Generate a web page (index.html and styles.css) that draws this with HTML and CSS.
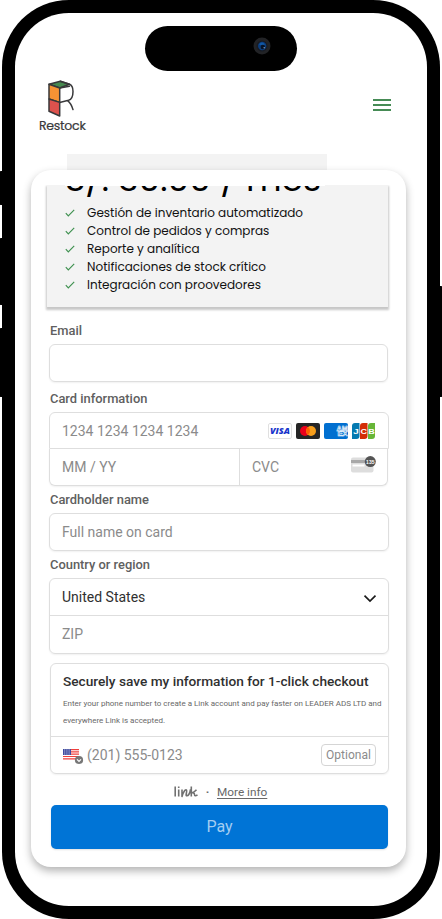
FILE: index.html
```
<!DOCTYPE html>
<html lang="es">
<head>
<meta charset="utf-8">
<title>Restock</title>
<link rel="stylesheet" href="styles.css">
</head>
<body>
<div class="device">
  <i class="key key-a"></i><i class="key key-b"></i><i class="key key-c"></i><i class="key key-d"></i>
  <div class="phone"><div class="screen">
    <div class="island">
      <svg width="18" height="18" viewBox="0 0 18 18"><circle cx="9" cy="9" r="8.5" fill="#222326"/><circle cx="9" cy="9" r="5.500" fill="#181b22"/><circle cx="9.2" cy="9" r="4.2" fill="#0a3c7c"/><path d="M6 7.5Q9 3.5 12 7.5L9 8.5z" fill="#1258a4"/><circle cx="9.800" cy="10" r="2.200" fill="#071326"/><circle cx="11.200" cy="10.800" r=".7" fill="#8fb0d5"/></svg>
    </div>
    <header class="header">
      <div class="brand">
        <svg width="28" height="38" viewBox="0 0 28 38" stroke="#38383a" stroke-width="1.5" stroke-linejoin="round" stroke-linecap="round">
          <path d="M2 4.2 13.3 1.2 22.5 4.2 12.7 8z" fill="#46894f"/>
          <path d="M2 4.2 12.7 8V22.4L2 19z" fill="#f79334"/>
          <path d="M2 19 12.7 22.4V36L2 31.2z" fill="#dd524d"/>
          <path d="M13.3 1.2 22.5 4.2C25 5 26 7.500 26 11.500C26 16.500 24.500 19.500 21.500 20.300L12.700 22.400M12.700 8 22.500 6.200M20.500 20.600C23 22.500 25 26 26 29.600" fill="none"/>
        </svg>
        <span class="brand-name">Restock</span>
      </div>
      <div class="menu"><i></i><i></i><i></i></div>
    </header>
    <div class="strip"></div>
    <main class="card">
      <section class="plan">
        <div class="price-clip"><div class="price">S/. 30.00 / mes</div></div>
        <ul class="features">
          <li><svg class="check" viewBox="0 0 10 8"><path d="M.8 4.200 3.300 6.900 9.200 .8"/></svg><span>Gestión de inventario automatizado</span></li>
          <li><svg class="check" viewBox="0 0 10 8"><path d="M.8 4.200 3.300 6.900 9.200 .8"/></svg><span>Control de pedidos y compras</span></li>
          <li><svg class="check" viewBox="0 0 10 8"><path d="M.8 4.200 3.300 6.900 9.200 .8"/></svg><span>Reporte y analítica</span></li>
          <li><svg class="check" viewBox="0 0 10 8"><path d="M.8 4.200 3.300 6.900 9.200 .8"/></svg><span>Notificaciones de stock crítico</span></li>
          <li><svg class="check" viewBox="0 0 10 8"><path d="M.8 4.200 3.300 6.900 9.200 .8"/></svg><span>Integración con proovedores</span></li>
        </ul>
      </section>
      <form class="form">
        <div class="label">Email</div>
        <div class="box narrow email"></div>
        <div class="label label-card">Card information</div>
        <div class="row number"><span>1234 1234 1234 1234</span>
          <div class="logos">
            <svg width="24" height="16" viewBox="0 0 24 16"><rect x=".5" y=".5" width="23" height="15" rx="1.5" fill="#fff" stroke="#e0e0e0"/><text x="2" y="11.200" class="visa" textLength="20" lengthAdjust="spacingAndGlyphs">VISA</text></svg>
            <svg width="24" height="16" viewBox="0 0 24 16"><rect width="24" height="16" rx="2" fill="#252525"/><circle cx="9" cy="8" r="5" fill="#eb001b"/><circle cx="15" cy="8" r="5" fill="#f79e1b"/><path d="M12 4a5 5 0 0 1 0 8a5 5 0 0 1 0-8" fill="#ff5f00"/></svg>
            <svg width="24" height="16" viewBox="0 0 24 16"><rect width="24" height="16" rx="2" fill="#016fd0"/><g class="amex"><text x="12.500" y="7.800" textLength="11.200" lengthAdjust="spacingAndGlyphs">AM</text><text x="13.500" y="13" textLength="10.200" lengthAdjust="spacingAndGlyphs">EX</text></g></svg>
            <svg width="24" height="16" viewBox="0 0 24 16"><path d="M3 0H7.500V13a3 3 0 0 1-3 3H0V3a3 3 0 0 1 3-3z" fill="#047ab1"/><path d="M11 0h4.500v13a3 3 0 0 1-3 3H8V3a3 3 0 0 1 3-3z" fill="#d42d06"/><path d="M19 0h4v13a3 3 0 0 1-3 3h-4V3a3 3 0 0 1 3-3z" fill="#67b637"/><g class="jcb"><text x="1.200" y="11" textLength="5.500" lengthAdjust="spacingAndGlyphs">J</text><text x="8.500" y="11" textLength="6.500" lengthAdjust="spacingAndGlyphs">C</text><text x="16.300" y="11" textLength="6.500" lengthAdjust="spacingAndGlyphs">B</text></g></svg>
          </div>
        </div>
        <div class="row expiry"><span class="mm">MM / YY</span><div class="cvc"><span>CVC</span>
          <svg width="25" height="17" viewBox="0 0 25 17"><rect y="1.500" width="22.500" height="15" rx="2" fill="#ddd"/><rect y="4" width="22.500" height="3" fill="#a8a8a8"/><rect x="1.500" y="8.500" width="12" height="2" fill="#fff"/><circle cx="19.300" cy="5.600" r="5.500" fill="#545454"/><text x="15.100" y="7.900" class="digits" textLength="8.400" lengthAdjust="spacingAndGlyphs">135</text></svg></div></div>
        <div class="label label-below">Cardholder name</div>
        <div class="box holder">Full name on card</div>
        <div class="label label-below">Country or region</div>
        <div class="group">
          <div class="country">United States<svg width="14" height="9" viewBox="0 0 14 9"><path d="M1.500 1.700 7 7l5.500-5.300" fill="none" stroke="#1a1a1a" stroke-width="1.700"/></svg></div>
          <div class="zip">ZIP</div>
        </div>
        <div class="group save">
          <div class="save-text"><strong>Securely save my information for 1-click checkout</strong>
            <p>Enter your phone number to create a Link account and pay faster on LEADER ADS LTD and<br>everywhere Link is accepted.</p></div>
          <div class="phone-row">
            <svg width="21" height="16" viewBox="0 0 21 16"><rect width="16" height="11" fill="#fff"/><path d="M0 .6h16M0 2.900h16M0 5.200h16M0 7.500h16M0 9.800h16" stroke="#ef403c" stroke-width="1.200"/><rect width="8" height="6" fill="#3f4b9f"/><path d="M1 1h6M1 3h6M1 5h6" stroke="#fff" stroke-width=".8" stroke-dasharray=".8 1"/><circle cx="16" cy="11" r="4.100" fill="#777"/><path d="m14 10.300 2 2 2-2" fill="none" stroke="#fff" stroke-width="1.200"/></svg>
            <span>(201) 555-0123</span><em>Optional</em>
          </div>
        </div>
        <div class="more">
          <svg width="24" height="12" viewBox="0 0 24 12" fill="none" stroke="#717171" stroke-width="1.600" stroke-linejoin="round"><path d="M1.200 .5v10M4.700 3.500v7M4.700 .5v1.500M8 3.500v7C9 6 11.500 3 12.500 4S11 10 12.800 9.800C14.500 9.600 16 6.500 16.500 3.500M17.300 .5v10M22.500 3.800C21 5.500 19.500 6.500 17.500 7C19 6.500 20.500 7 20.500 8.500S21.500 10 23.500 9"/></svg>
          <b>·</b><a>More info</a>
        </div>
        <div class="pay">Pay</div>
      </form>
    </main>
  </div></div>
</div>
</body>
</html>
```
FILE: styles.css
```
* { box-sizing: border-box; }
body { margin: 0; background: #fff; font-family: Roboto, sans-serif; }
.device { position: relative; width: 442px; height: 919px; overflow: hidden; }
.key { position: absolute; background: #000; width: 4px; }
.key-a { left: -1px; top: 171px; height: 34px; border-radius: 2px 0 0 2px; }
.key-b { left: -1px; top: 238px; height: 67px; border-radius: 2px 0 0 2px; }
.key-c { left: -1px; top: 328px; height: 69px; border-radius: 2px 0 0 2px; }
.key-d { right: -1px; top: 286px; height: 111px; border-radius: 0 2px 2px 0; }
.phone { width: 437.500px; height: 918.500px; margin-left: 2.300px; padding: 12.500px 12.700px; border-radius: 67px; background: #000; }
.screen { height: 893.500px; border-radius: 54px; background: #fff; display: flex; flex-direction: column; }
.island { width: 152px; height: 45px; border-radius: 23px; background: #000; margin: 13.500px 0 0 130px; display: flex; justify-content: flex-end; padding: 11px 26px 0 0; flex: none; }
.header { display: flex; justify-content: space-between; height: 83px; padding: 9px 36px 0 24px; flex: none; }
.brand { display: flex; flex-direction: column; width: 48px; }
.brand svg { margin-left: 8px; flex: none; }
.brand-name { font: 400 12.500px/15px Poppins, Inter, sans-serif; color: #38383a; letter-spacing: -.27px; -webkit-text-stroke: .2px #38383a; white-space: nowrap; }
.menu { display: flex; flex-direction: column; gap: 3px; padding-top: 19px; width: 18px; }
.menu i { height: 2px; background: #468b55; }
.strip { width: 260px; height: 16px; margin-left: 52px; background: #f3f3f3; flex: none; }
.card { width: 375px; height: 697px; margin-left: 16px; border-radius: 20px; background: #fff; box-shadow: 0 4px 8px rgba(0,0,0,.3); display: flex; flex-direction: column; flex: none; }
.plan { width: 341px; height: 122px; margin: 15px 0 0 16px; background: #f3f3f3; box-shadow: 0 2px 2px 1px rgba(0,0,0,.22); flex: none; clip-path: inset(0 -6px -6px -6px); }
.price-clip { height: 19px; width: 260px; margin-left: 18px; border-top: 1px solid #fff; }
.price { font: 400 34.600px/44px Poppins, Inter, sans-serif; color: #000; margin-top: -29px; padding-bottom: 1px; white-space: pre; clip-path: inset(29px -10px 0 -10px); }
.features { list-style: none; margin: 0; padding: 0 0 0 18px; font: 400 12px/18px Poppins, Inter, sans-serif; color: #111; }
.features li { display: flex; align-items: center; height: 18px; white-space: nowrap; }
.check { width: 10px; height: 8px; margin-right: 12.100px; fill: none; stroke: #3f9150; stroke-width: 1.150; }
.form { display: flex; flex-direction: column; padding: 16px 0 0 18px; }
.label { font-size: 12.900px; font-weight: 500; line-height: 16px; color: #606060; padding-left: 1px; }
.box { width: 340px; height: 38px; border: 1px solid #dedede; border-radius: 6px; box-shadow: 0 1px 2px rgba(0,0,0,.06); padding-left: 12px; font-size: 14px; line-height: 36px; color: #8b8b8b; }
.narrow, .expiry { width: 339px; }
.email { margin-top: 5px; }
.label-card { margin-top: 9px; }
.row { display: flex; align-items: center; border: 1px solid #dedede; color: #8b8b8b; font-size: 14px; }
.number { width: 340px; height: 37px; margin-top: 5px; border-radius: 6px 6px 0 0; padding: 1px 12px 0 12px; justify-content: space-between; }
.logos { display: flex; gap: 4px; }
.visa { font: italic 800 8px "Open Sans", sans-serif; fill: #1734cb; }
.amex text { font: 700 6.500px "Liberation Sans", sans-serif; fill: none; stroke: #fff; stroke-width: .5; }
.jcb text { font: 700 8px "Liberation Sans", sans-serif; fill: #fff; }
.digits { font: 700 6px "Liberation Sans", sans-serif; fill: #fff; }
.expiry { height: 37px; border-top: 0; border-radius: 0 0 6px 6px; box-shadow: 0 1px 2px rgba(0,0,0,.06); }
.mm { width: 189px; padding: 0 0 0 12px; }
.cvc { flex: 1; align-self: stretch; border-left: 1px solid #dedede; display: flex; align-items: center; justify-content: space-between; padding: 0 11px 0 12px; }
.cvc svg { margin-top: -5px; }
.label-below { margin-top: 6px; }
.holder { margin-top: 5px; }
.group { width: 340px; height: 76px; margin-top: 5px; border: 1px solid #dedede; border-radius: 6px; box-shadow: 0 1px 2px rgba(0,0,0,.06); }
.country { height: 37px; border-bottom: 1px solid #dedede; display: flex; align-items: center; justify-content: space-between; padding: 0 11px 0 12px; font-size: 14px; color: #303030; }
.country svg { margin-top: 2px; }
.zip { padding-left: 12px; line-height: 37px; font-size: 14px; color: #8b8b8b; }
.save { width: 339px; height: 111px; margin: 9px 0 0 1px; }
.save-text { height: 73px; padding: 9px 0 0 12px; border-bottom: 1px solid #dedede; white-space: nowrap; }
.save strong { display: block; font-size: 13.680px; line-height: 17px; font-weight: 500; color: #303030; }
.save p { margin: 5px 0 0; font-size: 8px; line-height: 17px; color: #686868; }
.phone-row { height: 36px; display: flex; align-items: center; padding: 0 12px; color: #8b8b8b; font-size: 14px; }
.phone-row svg { margin: 4px 3px 0 0; }
.phone-row em { margin-left: auto; width: 55px; height: 22px; border: 1px solid #d5d5d5; border-radius: 4px; font: 400 12px/20px Roboto, sans-serif; text-align: center; }
.more { height: 31px; padding: 4px 0 0 125px; display: flex; align-items: center; font-size: 11.800px; color: #686868; }
.more b { margin: 0 6.500px; width: 6px; text-align: center; font-weight: 700; }
.more a { text-decoration: underline; text-underline-offset: 2px; }
.pay { width: 337px; height: 44px; margin-left: 2px; border-radius: 5px; background: #0074d6; color: #a3cdf1; font-size: 16px; line-height: 44px; text-align: center; box-shadow: 0 1px 2px rgba(0,0,0,.12); }
```
